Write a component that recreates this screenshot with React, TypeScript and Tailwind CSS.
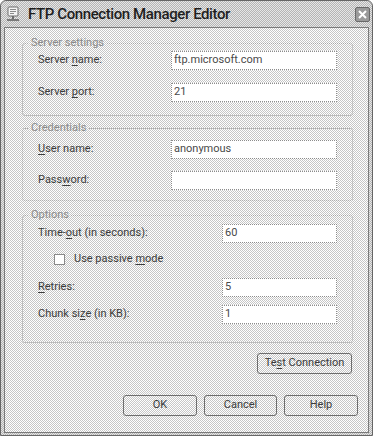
import React from "react";

const checker =
  "bg-[repeating-conic-gradient(#c6c6c6_0_25%,#ffffff_0_50%)] bg-size-[2px_2px]";

function U({ children }: { children: React.ReactNode }) {
  return <span className="underline underline-offset-2">{children}</span>;
}

function Field({
  label,
  value,
  wide,
}: {
  label: React.ReactNode;
  value?: string;
  wide?: boolean;
}) {
  return (
    <div className="flex items-center h-[19px]">
      <div className="flex-1 pl-[15px] text-[#3c3c3c]">{label}</div>
      <div
        className={
          "h-[19px] bg-white border border-dotted border-[#8c8c8c] flex items-center px-[2px] text-[#4a4a4a] " +
          (wide ? "w-[166px]" : "w-[115px]")
        }
      >
        {value}
      </div>
    </div>
  );
}

function Group({
  title,
  children,
  className,
}: {
  title: string;
  children: React.ReactNode;
  className?: string;
}) {
  return (
    <fieldset
      className={
        "ml-[17px] w-[331px] border border-dotted border-[#a8a8a8] rounded-[3px] pr-[15px] " +
        (className ?? "")
      }
    >
      <legend className="ml-[6px] px-[2px] text-[#8a8a8a] leading-[14px]">
        {title}
      </legend>
      {children}
    </fieldset>
  );
}

function Btn({ children, w }: { children: React.ReactNode; w: string }) {
  return (
    <div
      className={
        "h-[21px] border border-[#6e6e6e] rounded-[3px] flex items-center justify-center text-[#3c3c3c] " +
        checker +
        " " +
        w
      }
    >
      {children}
    </div>
  );
}

export default function App() {
  return (
    <div
      className="w-[373px] h-[436px] flex flex-col border border-[#666] rounded-t-[6px] overflow-hidden bg-[repeating-conic-gradient(#b4b4b4_0_25%,#e6e6e6_0_50%)] bg-size-[2px_2px] text-[11px]"
      style={{ fontFamily: 'Roboto, "Liberation Sans", sans-serif' }}
    >
      <div className="h-[26px] flex items-center pl-[4px] pr-[2px] shrink-0">
        <svg width="16" height="16" viewBox="0 0 16 16" className="shrink-0">
          <rect x="3" y="1" width="10" height="9" rx="1" fill="#f4f4f4" stroke="#6c6c6c" />
          <rect x="5" y="3" width="6" height="1" fill="#8a8a8a" />
          <rect x="5" y="5" width="6" height="1" fill="#8a8a8a" />
          <rect x="5" y="7" width="4" height="1" fill="#8a8a8a" />
          <rect x="7" y="10" width="2" height="3" fill="#6c6c6c" />
          <rect x="2" y="13" width="12" height="2" fill="#7a7a7a" />
        </svg>
        <span className="ml-[7px] text-[15px] font-medium text-[#1e1e1e] tracking-[-0.4px]">
          FTP Connection Manager Editor
        </span>
        <div className="ml-auto w-[15px] h-[15px] rounded-[2px] border border-[#6a6a6a] bg-[#9a9a9a] flex items-center justify-center">
          <svg width="9" height="9" viewBox="0 0 9 9">
            <path d="M1 1L8 8M8 1L1 8" stroke="#ffffff" strokeWidth="2" />
          </svg>
        </div>
      </div>
      <div
        className={
          "flex-1 mx-[3px] mb-[2px] border border-[#7a7a7a] flex flex-col pt-[8px] " +
          checker
        }
      >
        <Group title="Server settings" className="pb-[13px]">
          <div className="flex flex-col gap-[13px] pt-[1px]">
            <Field
              wide
              label={
                <>
                  Server <U>n</U>ame:
                </>
              }
              value="ftp.microsoft.com"
            />
            <Field
              wide
              label={
                <>
                  Server <U>p</U>ort:
                </>
              }
              value="21"
            />
          </div>
        </Group>
        <Group title="Credentials" className="mt-[5px] pb-[10px]">
          <div className="flex flex-col gap-[12px] pt-[5px]">
            <Field
              wide
              label={
                <>
                  <U>U</U>ser name:
                </>
              }
              value="anonymous"
            />
            <Field
              wide
              label={
                <>
                  Pass<U>w</U>ord:
                </>
              }
            />
          </div>
        </Group>
        <Group title="Options" className="mt-[7px] pb-[18px]">
          <div className="flex flex-col pt-[2px]">
            <Field
              label={
                <>
                  Time-<U>o</U>ut (in seconds):
                </>
              }
              value="60"
            />
            <div className="flex items-center h-[11px] mt-[11px] pl-[31px] text-[#3c3c3c]">
              <div className="w-[11px] h-[11px] bg-white border border-[#8a8a8a]" />
              <span className="ml-[9px]">
                Use passive <U>m</U>ode
              </span>
            </div>
            <div className="mt-[13px]">
              <Field
                label={
                  <>
                    <U>R</U>etries:
                  </>
                }
                value="5"
              />
            </div>
            <div className="mt-[8px]">
              <Field
                label={
                  <>
                    Chunk si<U>z</U>e (in KB):
                  </>
                }
                value="1"
              />
            </div>
          </div>
        </Group>
        <div className="flex justify-end pr-[16px] mt-[10px]">
          <Btn w="w-[95px]">
            <span>
              Te<U>s</U>t Connection
            </span>
          </Btn>
        </div>
        <div className="flex justify-end gap-[7px] pr-[10px] mt-[21px]">
          <Btn w="w-[74px]">OK</Btn>
          <Btn w="w-[73px]">Cancel</Btn>
          <Btn w="w-[74px]">Help</Btn>
        </div>
      </div>
    </div>
  );
}
